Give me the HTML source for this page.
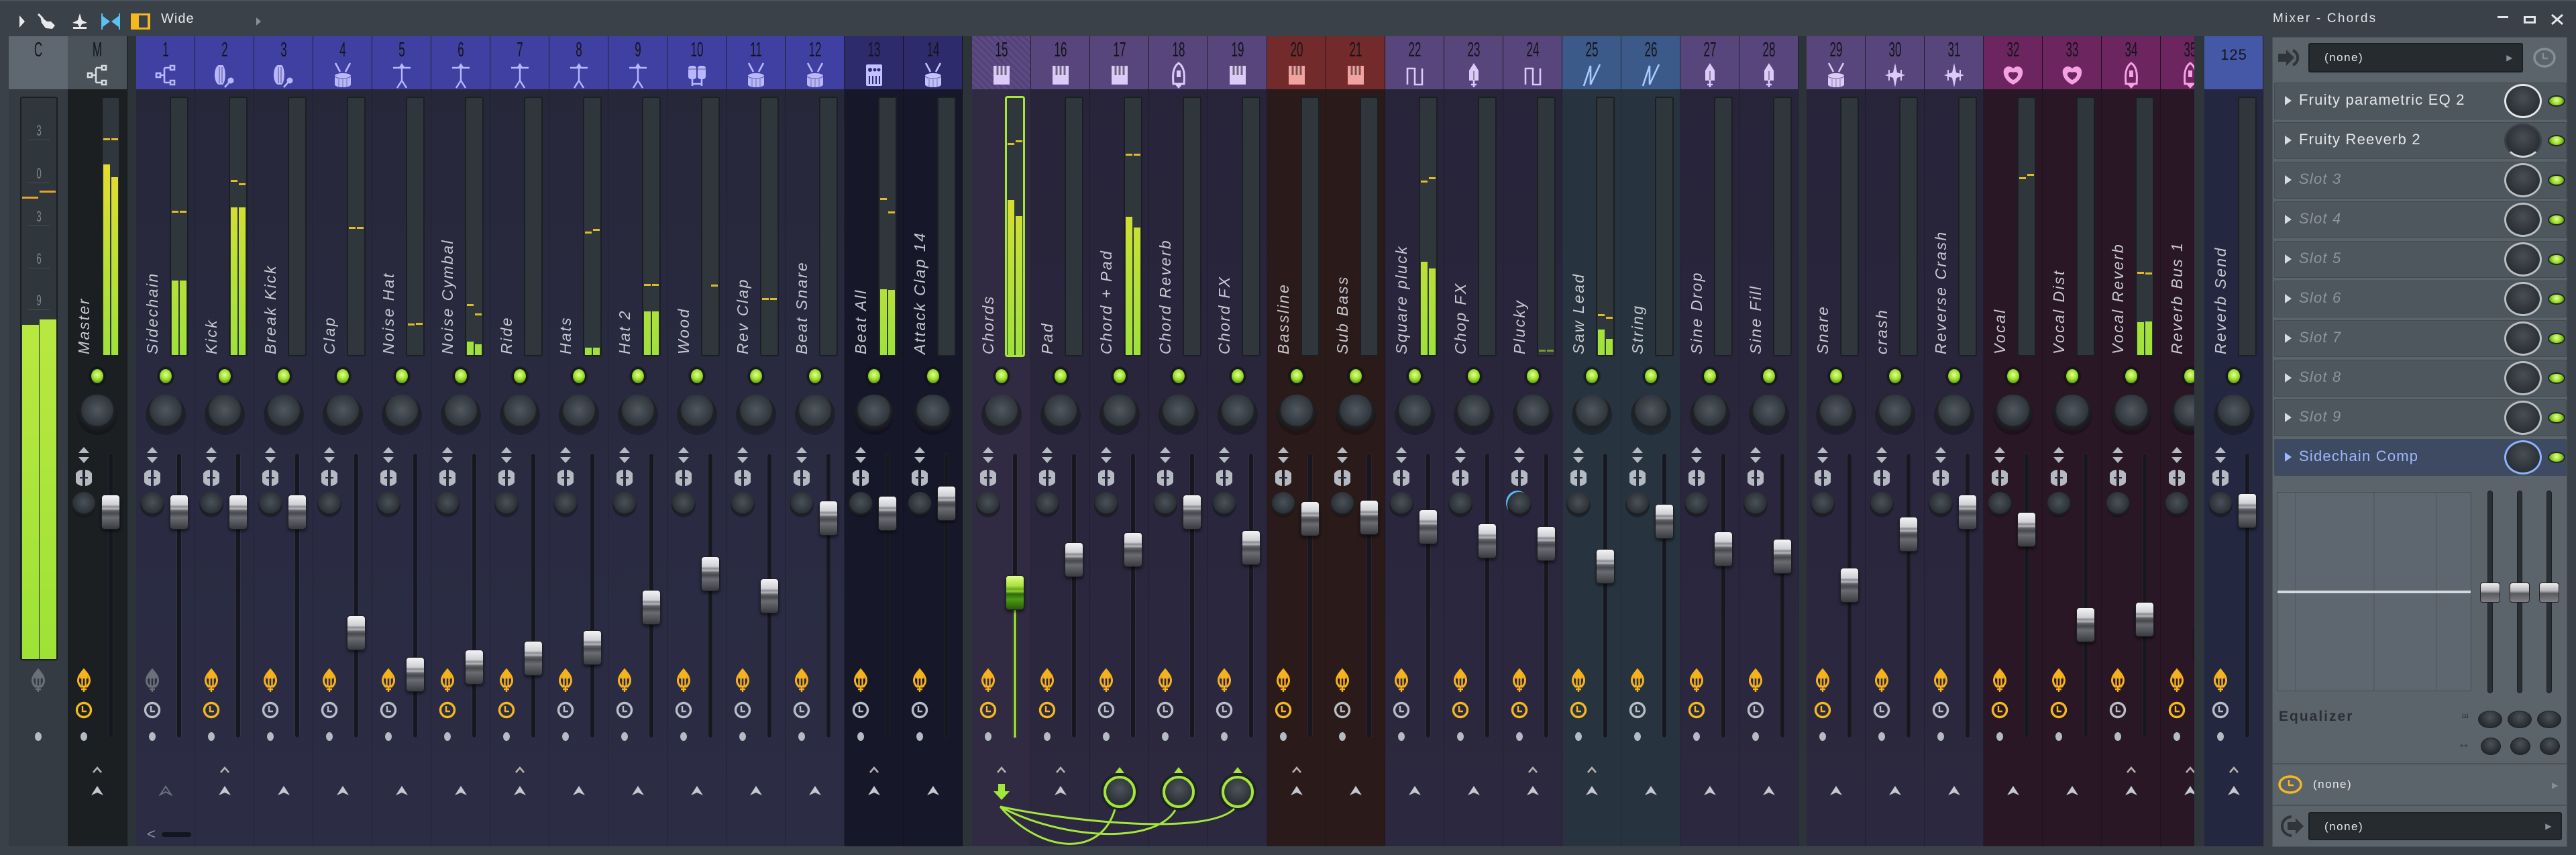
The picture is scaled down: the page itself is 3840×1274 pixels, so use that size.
<!DOCTYPE html>
<html><head><meta charset="utf-8"><style>
*{box-sizing:border-box}
body{margin:0;width:3840px;height:1274px;background:#3a4148;overflow:hidden;font-family:"Liberation Sans",sans-serif;position:relative}
i,svg{position:absolute;display:block}
#mx{position:absolute;left:0;top:0;width:3271px;height:1261px;overflow:hidden}
.s{position:absolute;top:54px;width:88px;height:1207px;border-right:1px solid rgba(0,0,0,.22)}
.h{position:absolute;left:0;top:0;width:100%;height:79px}
.h b{position:absolute;left:0;top:4px;width:88px;text-align:center;font-weight:normal;font-size:31px;line-height:32px;color:#14141c;transform:scaleX(.55)}
.hi{left:24px;top:38px;width:40px;height:40px}
.m{position:absolute;left:50px;top:90px;width:28px;height:387px;background:#30373c;border:2px solid #1b1f23;border-radius:3px}
.m i{bottom:0;width:10px;background:linear-gradient(to top,#9ee23a 0,#bfe035 150px,#e6dc2e 280px,#f5c02a 383px);background-size:100% 383px;background-position:bottom}
.m u{position:absolute;width:10px;height:3px;background:#e2bb2a}
.m .L{left:1px}.m .R{left:13px}
.s p{position:absolute;margin:0;left:12px;top:474px;transform-origin:0 0;transform:rotate(-90deg);white-space:nowrap;font-style:italic;font-size:23px;line-height:24px;letter-spacing:2.4px;color:#c9c9d2}
.led{left:33px;top:494px;width:22px;height:25px;border-radius:50%;background:radial-gradient(circle at 50% 40%,#e6ff90,#9ee030 45%,#5a9a10 80%);border:2px solid #15191b;box-shadow:0 0 0 2px rgba(0,0,0,.3)}
.kn{left:14px;top:534px;width:60px;height:60px;border-radius:50%;background:radial-gradient(circle at 50% 38%,#50575f,#30363c 48%,#1d2125 52%,rgba(0,0,0,.25) 70%)}
.ud{left:13px;top:611px;width:22px;height:26px}
.pn{left:12px;top:645px;width:24px;height:26px}
.sk{left:6px;top:679px;width:36px;height:38px;border-radius:50%;background:radial-gradient(circle at 50% 40%,#4a5159,#2c3237 55%,#1a1e22 62%,rgba(0,0,0,.25) 75%)}
.tr{left:61px;top:622px;width:6px;height:423px;background:#17181f;border-radius:3px;box-shadow:0 0 0 1px rgba(255,255,255,.04)}
.fd{left:50px;width:28px;height:52px;border-radius:5px;border:1px solid #1d1f24;background:linear-gradient(#f4f4f6 0,#cfd0d4 28%,#8a8b90 34%,#b6b7bb 40%,#606166 46%,#48494e 54%,#6b6c72 66%,#3a3b40 100%);box-shadow:0 3px 4px rgba(0,0,0,.5)}
.fd.g{background:linear-gradient(#e2ff8a 0,#a8e040 30%,#6aa820 40%,#8ed030 46%,#2e6a0c 54%,#4e9a16 70%,#2a5a0a 100%)}
.bl{left:13px;top:942px;width:22px;height:36px;color:#f6b21e}
.bl.off{color:#6b7179}
.ck{left:11px;top:991px;width:26px;height:26px;color:#b9bec6}
.ck.y{color:#f4b820}
.dt{left:19px;top:1037px;width:10px;height:13px;border-radius:50%;background:#b4bbc3}
.sa{left:37px;top:1088px;width:14px;height:10px}
.ba{left:34px;top:1116px;width:20px;height:16px}
.gk{left:20px;top:1102px;width:48px;height:48px;border-radius:50%;border:4px solid #a4e63a;background:radial-gradient(circle at 50% 38%,#4d545c,#2b3136 70%);box-shadow:0 0 0 4px #1f2228}
.gb{background:linear-gradient(#262739,#2a2b42 60%,#2c2d45)}.gb .h{background:#4040a2;color:#b7b6ff}
.gn{background:#17172a}.gn .h{background:#2d2b6c;color:#c2c0ff}
.gp{background:linear-gradient(#27243a,#2c283f)}.gp .h{background:#57457b;color:#dccaf8}
.gr{background:#2a1a1a}.gr .h{background:#732a2b;color:#f2a3a0}
.gs{background:#27343f}.gs .h{background:#3c5a89;color:#a6ccff}
.gm{background:#291725}.gm .h{background:#6d2560;color:#f4a2e2}
.sel{background:#302a42}.sel .h{background:repeating-linear-gradient(45deg,#5e4b84 0 3px,#54437a 3px 7px)}
.sep{position:absolute;top:54px;height:1207px;background:#2d3439}
#rp{position:absolute;left:3387px;top:55px;width:440px;height:1207px;background:#5b636b;border:1px solid #4a5158}
.sl{position:absolute;left:2px;width:436px;height:55px;background:#4e565e;border:1px solid #434a51;border-radius:2px}
.sl span{position:absolute;left:36px;top:12px;font-size:22px;letter-spacing:1.2px;color:#e4e7ea;white-space:nowrap}
.sl.e span{font-style:italic;color:#8d949b}
.sl.a{background:#3d4a61}.sl.a span{color:#9cb8ff}
.sl .t{position:absolute;left:15px;top:19px;width:0;height:0;border-left:10px solid #d8dce0;border-top:7px solid transparent;border-bottom:7px solid transparent}
.sl .k{position:absolute;left:342px;top:1px;width:56px;height:51px;border-radius:50%;border:3px solid #b9bec3;background:radial-gradient(circle at 50% 40%,#474e55,#2b3035 70%)}
.sl .l{position:absolute;left:407px;top:18px;width:26px;height:17px;border-radius:50%;background:radial-gradient(circle at 50% 40%,#e6ff90,#9ee030 45%,#5a9a10 85%);border:2px solid #23282c}
.dd{position:absolute;background:#262b30;border:2px solid #1d2125;border-radius:3px;color:#e6e8ea;font-size:17px;letter-spacing:1.5px;padding:10px 0 0 22px}
.tk{position:absolute;width:8px;background:#2a2f34;border:1px solid #1c2024;border-radius:4px}
.th{position:absolute;width:30px;height:30px;border-radius:4px;background:linear-gradient(#eee,#b4b5b9 40%,#5a5b60 55%,#808186);border:1px solid #222}
.sm{position:absolute;width:30px;height:26px;border-radius:50%;background:radial-gradient(circle at 50% 35%,#4a5158,#262b30 70%);border:1px solid #1c2024}
</style></head><body>
<svg width="0" height="0" style="position:absolute">
<defs>
<symbol id="ud" viewBox="0 0 22 26"><path d="M11 1L19 10H3Z M3 16H19L11 25Z" fill="#b4b9c2"/></symbol>
<symbol id="pn" viewBox="0 0 24 26"><path d="M10 1A12 12 0 0 0 10 25Z M14 1A12 12 0 0 1 14 25Z" fill="#b4b9c2"/><path d="M6 13h12" stroke="#2a2b40" stroke-width="2"/></symbol>
<symbol id="bulb" viewBox="0 0 22 36"><path d="M11 2C6 8 2.5 12 2.5 18C2.5 23 5 25 6.5 27H15.5C17 25 19.5 23 19.5 18C19.5 12 16 8 11 2Z" fill="none" stroke="currentColor" stroke-width="3"/><path d="M11 3C8 7 5 11 5 15H17C17 11 14 7 11 3Z" fill="currentColor"/><path d="M8.5 15V27M13.5 15V27M11 27V35M7 31H15" stroke="currentColor" stroke-width="2.4"/></symbol>
<symbol id="ck" viewBox="0 0 26 26"><circle cx="13" cy="13" r="10.5" fill="none" stroke="currentColor" stroke-width="3.4"/><path d="M11 7V15H17" stroke="currentColor" stroke-width="2.4" fill="none"/></symbol>
<symbol id="sa" viewBox="0 0 14 10"><path d="M1 9L7 2L13 9" fill="none" stroke="#b6b0ae" stroke-width="2.6"/></symbol>
<symbol id="sag" viewBox="0 0 14 10"><path d="M0 10L7 1L14 10Z" fill="#a4e63a"/></symbol>
<symbol id="ba" viewBox="0 0 20 16"><path d="M10 1L19 15L10 11L1 15Z" fill="#c4c8d0"/></symbol>
<symbol id="bao" viewBox="0 0 20 16"><path d="M10 2L18 14L10 10L2 14Z" fill="none" stroke="#6b7280" stroke-width="2"/></symbol>
<symbol id="bad" viewBox="0 0 26 24"><path d="M8 0H18V11H25L13 24L1 11H8Z" fill="#a4e63a"/></symbol>
<symbol id="route" viewBox="0 0 40 40"><path d="M6 17h6v6H6z M27 6h6v6h-6z M27 28h6v6h-6z M12 20h6 M18 9v22 M18 9h9 M18 31h9" fill="none" stroke="currentColor" stroke-width="2.6"/></symbol>
<symbol id="kick" viewBox="0 0 40 40"><path d="M11 5C3 8 3 31 11 34H17C22 30 22 9 17 5Z" fill="currentColor"/><path d="M12 8v24M16 8v24" stroke="#000" stroke-opacity=".35" stroke-width="1.6"/><circle cx="29" cy="28" r="4.5" fill="currentColor"/><path d="M27 30L20 38" stroke="currentColor" stroke-width="2.6"/></symbol>
<symbol id="drum" viewBox="0 0 40 40"><path d="M9 2L16 15M31 2L24 15" stroke="currentColor" stroke-width="2.6"/><path d="M8 21a12 4 0 0 1 24 0V34a12 4 0 0 1-24 0Z" fill="currentColor"/><path d="M8 21a12 4 0 0 0 24 0" stroke="#000" stroke-opacity=".35" stroke-width="1.5" fill="none"/><path d="M14 26v11M20 26v12M26 26v11" stroke="#000" stroke-opacity=".25" stroke-width="1.5"/></symbol>
<symbol id="cym" viewBox="0 0 40 40"><path d="M7 9H33M20 6V28M20 28L13 39M20 28L27 39" stroke="currentColor" stroke-width="2.4" fill="none"/><path d="M20 2L24 8H16Z" fill="currentColor"/></symbol>
<symbol id="bongo" viewBox="0 0 40 40"><rect x="7" y="6" width="12" height="20" rx="4" fill="currentColor"/><rect x="21" y="6" width="12" height="20" rx="4" fill="currentColor"/><path d="M7 11h12M21 11h12" stroke="#000" stroke-opacity=".3" stroke-width="1.5"/><path d="M13 26v10M27 26v10M13 33h14" stroke="currentColor" stroke-width="2.6"/></symbol>
<symbol id="mach" viewBox="0 0 40 40"><rect x="8" y="4" width="24" height="32" rx="2" fill="currentColor"/><circle cx="14" cy="12" r="3" fill="#2d2b6c"/><circle cx="21" cy="12" r="2.5" fill="#2d2b6c"/><circle cx="27" cy="12" r="2.5" fill="#2d2b6c"/><path d="M13 21v12M18 21v12M23 21v12M28 21v12" stroke="#2d2b6c" stroke-width="2"/></symbol>
<symbol id="piano" viewBox="0 0 40 40"><rect x="8" y="6" width="24" height="28" fill="currentColor"/><path d="M14 6v14M20 6v14M26 6v14" stroke="#000" stroke-opacity=".5" stroke-width="3"/></symbol>
<symbol id="rocket" viewBox="0 0 40 40"><path d="M20 2C11 8 11 20 12 33H28C29 20 29 8 20 2Z" fill="none" stroke="currentColor" stroke-width="3"/><path d="M17 13h6v10h-6z M14 33L20 40L26 33Z" fill="currentColor"/></symbol>
<symbol id="pen" viewBox="0 0 40 40"><path d="M20 2L27 13V28H13V13Z" fill="currentColor"/><path d="M20 14V27" stroke="#000" stroke-opacity=".35" stroke-width="2"/><path d="M20 28v10M16 34h8" stroke="currentColor" stroke-width="2.6"/></symbol>
<symbol id="sq" viewBox="0 0 40 40"><path d="M9 34V10H20V34H31V10" fill="none" stroke="currentColor" stroke-width="2.6"/></symbol>
<symbol id="saw" viewBox="0 0 40 40"><path d="M8 36L18 6V34L32 4" fill="none" stroke="currentColor" stroke-width="2.6"/></symbol>
<symbol id="spark" viewBox="0 0 40 40"><path d="M20 2L23 16L35 20L23 24L20 38L17 24L5 20L17 16Z" fill="currentColor"/><path d="M11 12v16M29 12v16" stroke="currentColor" stroke-width="2"/></symbol>
<symbol id="lips" viewBox="0 0 40 40"><path d="M20 10C14 4 4 8 6 18C8 28 16 32 20 34C24 32 32 28 34 18C36 8 26 4 20 10Z M20 16C16 14 12 16 13 20C15 25 20 27 20 27C20 27 25 25 27 20C28 16 24 14 20 16Z" fill="currentColor" fill-rule="evenodd"/></symbol>
</defs></svg>

<!-- toolbar -->
<div style="position:absolute;left:0;top:0;width:3840px;height:2px;background:#4a525a"></div>
<svg style="left:24px;top:20px" width="400" height="24" viewBox="0 0 400 24">
<path d="M5 3L13 12L5 21Z" fill="#e8eaee"/>
<path d="M36 4L46 12L52 12L58 18L54 23L44 22L38 14Z" fill="#e8eaee"/><path d="M33 1L40 8" stroke="#e8eaee" stroke-width="3"/>
<path d="M95 0L98 10L106 14L98 16L96 20H105V23H85V20H94L92 16L84 14L92 10Z" fill="#e8eaee"/>
<path d="M128 3L140 12L128 21Z M154 3L142 12L154 21Z" fill="#5bc0f2"/><path d="M128 0V24M154 0V24" stroke="#5bc0f2" stroke-width="2"/>
<rect x="173" y="1" width="25" height="22" fill="none" stroke="#f5b820" stroke-width="4"/><rect x="175" y="3" width="8" height="18" fill="#f5b820"/>
<path d="M358 6L365 12L358 18Z" fill="#8a9098"/>
</svg>
<div style="position:absolute;left:240px;top:17px;font-size:20px;color:#e2e6ea;letter-spacing:1px">Wide</div>

<div id="mx">
<!-- C column -->
<div style="position:absolute;left:13px;top:54px;width:88px;height:1207px;background:#343b42">
<div style="position:absolute;left:0;top:0;width:88px;height:79px;background:#5f6870"></div>
<div style="position:absolute;left:0;top:4px;width:88px;text-align:center;font-size:31px;line-height:32px;color:#14141c;transform:scaleX(.55)">C</div>
<div style="position:absolute;left:17px;top:90px;width:56px;height:840px;background:#30373c;border:2px solid #1b1f23;border-radius:3px">
<div style="position:absolute;left:0;top:36px;width:52px;text-align:center;font-size:22px;color:#7f878e;transform:scaleX(.6)">3</div>
<div style="position:absolute;left:10px;top:62px;width:32px;height:1px;background:#444c53"></div>
<div style="position:absolute;left:0;top:100px;width:52px;text-align:center;font-size:22px;color:#7f878e;transform:scaleX(.6)">0</div>
<div style="position:absolute;left:10px;top:126px;width:32px;height:1px;background:#444c53"></div>
<div style="position:absolute;left:0;top:164px;width:52px;text-align:center;font-size:22px;color:#7f878e;transform:scaleX(.6)">3</div>
<div style="position:absolute;left:10px;top:190px;width:32px;height:1px;background:#444c53"></div>
<div style="position:absolute;left:0;top:227px;width:52px;text-align:center;font-size:22px;color:#7f878e;transform:scaleX(.6)">6</div>
<div style="position:absolute;left:10px;top:253px;width:32px;height:1px;background:#444c53"></div>
<div style="position:absolute;left:0;top:289px;width:52px;text-align:center;font-size:22px;color:#7f878e;transform:scaleX(.6)">9</div>
<div style="position:absolute;left:10px;top:315px;width:32px;height:1px;background:#444c53"></div>
<div style="position:absolute;left:1px;top:147px;width:24px;height:3px;background:#e8a32a"></div>
<div style="position:absolute;left:27px;top:138px;width:24px;height:3px;background:#e8a32a"></div>
<div style="position:absolute;left:1px;top:338px;width:25px;height:498px;background:linear-gradient(#b8e840,#9ee236)"></div>
<div style="position:absolute;left:27px;top:330px;width:25px;height:506px;background:linear-gradient(#b8e840,#9ee236)"></div>
</div>
<svg class="bl off" style="left:33px"><use href="#bulb"/></svg>
<i class="dt" style="left:39px"></i>
</div>

<!-- Master -->
<div class="s" style="left:101px;width:89px;background:#1b1f21"><div class="h" style="background:#4a525a;color:#d8dde2"><b>M</b><svg class="hi"><use href="#route"/></svg></div>
<div class="m"><i class="L" style="height:284px"></i><i class="R" style="height:265px"></i><u class="L" style="top:60px"></u><u class="R" style="top:60px"></u></div><p>Master</p>
<i class="led"></i><i class="kn"></i><svg class="ud"><use href="#ud"/></svg><svg class="pn"><use href="#pn"/></svg><i class="sk"></i><i class="tr"></i><i class="fd" style="top:683px"></i>
<svg class="bl"><use href="#bulb"/></svg><svg class="ck y"><use href="#ck"/></svg><i class="dt"></i><svg class="sa"><use href="#sa"/></svg><svg class="ba"><use href="#ba"/></svg></div>
<div class="sep" style="left:190px;width:13px"></div>

<div class="s gb" style="left:203px"><div class="h"><b>1</b><svg class="hi"><use href="#route"/></svg></div><div class="m"><i class="L" style="height:111px"></i><i class="R" style="height:111px"></i><u class="L" style="top:168px"></u><u class="R" style="top:168px"></u></div><p>Sidechain</p>
<i class="led"></i><i class="kn"></i><svg class="ud"><use href="#ud"/></svg><svg class="pn"><use href="#pn"/></svg><i class="sk"></i><i class="tr"></i><i class="fd" style="top:683px"></i>
<svg class="bl off"><use href="#bulb"/></svg><svg class="ck"><use href="#ck"/></svg><i class="dt"></i><svg class="ba"><use href="#bao"/></svg>
<div style="position:absolute;left:16px;top:1176px;color:#8a8f98;font-size:22px">&lt;</div><div style="position:absolute;left:38px;top:1186px;width:44px;height:7px;border-radius:4px;background:#121620"></div></div>

<div class="s gb" style="left:291px"><div class="h"><b>2</b><svg class="hi"><use href="#kick"/></svg></div><div class="m"><i class="L" style="height:220px"></i><i class="R" style="height:220px"></i><u class="L" style="top:122px"></u><u class="R" style="top:127px"></u></div><p>Kick</p>
<i class="led"></i><i class="kn"></i><svg class="ud"><use href="#ud"/></svg><svg class="pn"><use href="#pn"/></svg><i class="sk"></i><i class="tr"></i><i class="fd" style="top:683px"></i>
<svg class="bl"><use href="#bulb"/></svg><svg class="ck y"><use href="#ck"/></svg><i class="dt"></i><svg class="sa"><use href="#sa"/></svg><svg class="ba"><use href="#ba"/></svg></div>

<div class="s gb" style="left:379px"><div class="h"><b>3</b><svg class="hi"><use href="#kick"/></svg></div><div class="m"></div><p>Break Kick</p>
<i class="led"></i><i class="kn"></i><svg class="ud"><use href="#ud"/></svg><svg class="pn"><use href="#pn"/></svg><i class="sk"></i><i class="tr"></i><i class="fd" style="top:683px"></i>
<svg class="bl"><use href="#bulb"/></svg><svg class="ck"><use href="#ck"/></svg><i class="dt"></i><svg class="ba"><use href="#ba"/></svg></div>

<div class="s gb" style="left:467px"><div class="h"><b>4</b><svg class="hi"><use href="#drum"/></svg></div><div class="m"><u class="L" style="top:192px"></u><u class="R" style="top:192px"></u></div><p>Clap</p>
<i class="led"></i><i class="kn"></i><svg class="ud"><use href="#ud"/></svg><svg class="pn"><use href="#pn"/></svg><i class="sk"></i><i class="tr"></i><i class="fd" style="top:863px"></i>
<svg class="bl"><use href="#bulb"/></svg><svg class="ck"><use href="#ck"/></svg><i class="dt"></i><svg class="ba"><use href="#ba"/></svg></div>

<div class="s gb" style="left:555px"><div class="h"><b>5</b><svg class="hi"><use href="#cym"/></svg></div><div class="m"><u class="L" style="top:336px"></u><u class="R" style="top:335px"></u></div><p>Noise Hat</p>
<i class="led"></i><i class="kn"></i><svg class="ud"><use href="#ud"/></svg><svg class="pn"><use href="#pn"/></svg><i class="sk"></i><i class="tr"></i><i class="fd" style="top:925px"></i>
<svg class="bl"><use href="#bulb"/></svg><svg class="ck"><use href="#ck"/></svg><i class="dt"></i><svg class="ba"><use href="#ba"/></svg></div>

<div class="s gb" style="left:643px"><div class="h"><b>6</b><svg class="hi"><use href="#cym"/></svg></div><div class="m"><i class="L" style="height:20px"></i><i class="R" style="height:16px"></i><u class="L" style="top:307px"></u><u class="R" style="top:321px"></u></div><p>Noise Cymbal</p>
<i class="led"></i><i class="kn"></i><svg class="ud"><use href="#ud"/></svg><svg class="pn"><use href="#pn"/></svg><i class="sk"></i><i class="tr"></i><i class="fd" style="top:914px"></i>
<svg class="bl"><use href="#bulb"/></svg><svg class="ck y"><use href="#ck"/></svg><i class="dt"></i><svg class="ba"><use href="#ba"/></svg></div>

<div class="s gb" style="left:731px"><div class="h"><b>7</b><svg class="hi"><use href="#cym"/></svg></div><div class="m"></div><p>Ride</p>
<i class="led"></i><i class="kn"></i><svg class="ud"><use href="#ud"/></svg><svg class="pn"><use href="#pn"/></svg><i class="sk"></i><i class="tr"></i><i class="fd" style="top:901px"></i>
<svg class="bl"><use href="#bulb"/></svg><svg class="ck y"><use href="#ck"/></svg><i class="dt"></i><svg class="sa"><use href="#sa"/></svg><svg class="ba"><use href="#ba"/></svg></div>

<div class="s gb" style="left:819px"><div class="h"><b>8</b><svg class="hi"><use href="#cym"/></svg></div><div class="m"><i class="L" style="height:11px"></i><i class="R" style="height:11px"></i><u class="L" style="top:199px"></u><u class="R" style="top:195px"></u></div><p>Hats</p>
<i class="led"></i><i class="kn"></i><svg class="ud"><use href="#ud"/></svg><svg class="pn"><use href="#pn"/></svg><i class="sk"></i><i class="tr"></i><i class="fd" style="top:885px"></i>
<svg class="bl"><use href="#bulb"/></svg><svg class="ck"><use href="#ck"/></svg><i class="dt"></i><svg class="ba"><use href="#ba"/></svg></div>

<div class="s gb" style="left:907px"><div class="h"><b>9</b><svg class="hi"><use href="#cym"/></svg></div><div class="m"><i class="L" style="height:65px"></i><i class="R" style="height:65px"></i><u class="L" style="top:277px"></u><u class="R" style="top:277px"></u></div><p>Hat 2</p>
<i class="led"></i><i class="kn"></i><svg class="ud"><use href="#ud"/></svg><svg class="pn"><use href="#pn"/></svg><i class="sk"></i><i class="tr"></i><i class="fd" style="top:825px"></i>
<svg class="bl"><use href="#bulb"/></svg><svg class="ck"><use href="#ck"/></svg><i class="dt"></i><svg class="ba"><use href="#ba"/></svg></div>

<div class="s gb" style="left:995px"><div class="h"><b>10</b><svg class="hi"><use href="#bongo"/></svg></div><div class="m"><u class="R" style="top:278px"></u></div><p>Wood</p>
<i class="led"></i><i class="kn"></i><svg class="ud"><use href="#ud"/></svg><svg class="pn"><use href="#pn"/></svg><i class="sk"></i><i class="tr"></i><i class="fd" style="top:775px"></i>
<svg class="bl"><use href="#bulb"/></svg><svg class="ck"><use href="#ck"/></svg><i class="dt"></i><svg class="ba"><use href="#ba"/></svg></div>

<div class="s gb" style="left:1083px"><div class="h"><b>11</b><svg class="hi"><use href="#drum"/></svg></div><div class="m"><u class="L" style="top:298px"></u><u class="R" style="top:298px"></u></div><p>Rev Clap</p>
<i class="led"></i><i class="kn"></i><svg class="ud"><use href="#ud"/></svg><svg class="pn"><use href="#pn"/></svg><i class="sk"></i><i class="tr"></i><i class="fd" style="top:808px"></i>
<svg class="bl"><use href="#bulb"/></svg><svg class="ck"><use href="#ck"/></svg><i class="dt"></i><svg class="ba"><use href="#ba"/></svg></div>

<div class="s gb" style="left:1171px"><div class="h"><b>12</b><svg class="hi"><use href="#drum"/></svg></div><div class="m"></div><p>Beat Snare</p>
<i class="led"></i><i class="kn"></i><svg class="ud"><use href="#ud"/></svg><svg class="pn"><use href="#pn"/></svg><i class="sk"></i><i class="tr"></i><i class="fd" style="top:692px"></i>
<svg class="bl"><use href="#bulb"/></svg><svg class="ck"><use href="#ck"/></svg><i class="dt"></i><svg class="ba"><use href="#ba"/></svg></div>

<div class="s gn" style="left:1259px"><div class="h"><b>13</b><svg class="hi"><use href="#mach"/></svg></div><div class="m"><i class="L" style="height:98px"></i><i class="R" style="height:97px"></i><u class="L" style="top:149px"></u><u class="R" style="top:169px"></u></div><p>Beat All</p>
<i class="led"></i><i class="kn"></i><svg class="ud"><use href="#ud"/></svg><svg class="pn"><use href="#pn"/></svg><i class="sk"></i><i class="tr"></i><i class="fd" style="top:685px"></i>
<svg class="bl"><use href="#bulb"/></svg><svg class="ck"><use href="#ck"/></svg><i class="dt"></i><svg class="sa"><use href="#sa"/></svg><svg class="ba"><use href="#ba"/></svg></div>

<div class="s gn" style="left:1347px"><div class="h"><b>14</b><svg class="hi"><use href="#drum"/></svg></div><div class="m"></div><p>Attack Clap 14</p>
<i class="led"></i><i class="kn"></i><svg class="ud"><use href="#ud"/></svg><svg class="pn"><use href="#pn"/></svg><i class="sk"></i><i class="tr"></i><i class="fd" style="top:670px"></i>
<svg class="bl"><use href="#bulb"/></svg><svg class="ck"><use href="#ck"/></svg><i class="dt"></i><svg class="ba"><use href="#ba"/></svg></div>

<div class="sep" style="left:1435px;width:14px"></div>

<div class="s gp sel" style="left:1449px"><div class="h"><b>15</b><svg class="hi"><use href="#piano"/></svg></div><div class="m" style="border-color:#a4e63a;box-shadow:0 0 0 1px #a4e63a"><i class="L" style="height:231px"></i><i class="R" style="height:207px"></i><u class="L" style="top:67px"></u><u class="R" style="top:63px"></u></div><p>Chords</p>
<i class="led"></i><i class="kn"></i><svg class="ud"><use href="#ud"/></svg><svg class="pn"><use href="#pn"/></svg><i class="sk"></i><i class="tr"></i><i style="left:62px;top:840px;width:4px;height:205px;background:#96d632"></i><i class="fd g" style="top:803px"></i>
<svg class="bl"><use href="#bulb"/></svg><svg class="ck y"><use href="#ck"/></svg><i class="dt"></i><svg class="sa"><use href="#sa"/></svg><svg style="left:31px;top:1114px;width:26px;height:24px"><use href="#bad"/></svg></div>

<div class="s gp" style="left:1537px"><div class="h"><b>16</b><svg class="hi"><use href="#piano"/></svg></div><div class="m"></div><p>Pad</p>
<i class="led"></i><i class="kn"></i><svg class="ud"><use href="#ud"/></svg><svg class="pn"><use href="#pn"/></svg><i class="sk"></i><i class="tr"></i><i class="fd" style="top:754px"></i>
<svg class="bl"><use href="#bulb"/></svg><svg class="ck y"><use href="#ck"/></svg><i class="dt"></i><svg class="sa"><use href="#sa"/></svg><svg class="ba"><use href="#ba"/></svg></div>

<div class="s gp" style="left:1625px"><div class="h"><b>17</b><svg class="hi"><use href="#piano"/></svg></div><div class="m"><i class="L" style="height:206px"></i><i class="R" style="height:190px"></i><u class="L" style="top:83px"></u><u class="R" style="top:83px"></u></div><p>Chord + Pad</p>
<i class="led"></i><i class="kn"></i><svg class="ud"><use href="#ud"/></svg><svg class="pn"><use href="#pn"/></svg><i class="sk"></i><i class="tr"></i><i class="fd" style="top:739px"></i>
<svg class="bl"><use href="#bulb"/></svg><svg class="ck"><use href="#ck"/></svg><i class="dt"></i><svg class="sa"><use href="#sag"/></svg><i class="gk"></i></div>

<div class="s gp" style="left:1713px"><div class="h"><b>18</b><svg class="hi"><use href="#rocket"/></svg></div><div class="m"></div><p>Chord Reverb</p>
<i class="led"></i><i class="kn"></i><svg class="ud"><use href="#ud"/></svg><svg class="pn"><use href="#pn"/></svg><i class="sk"></i><i class="tr"></i><i class="fd" style="top:683px"></i>
<svg class="bl"><use href="#bulb"/></svg><svg class="ck"><use href="#ck"/></svg><i class="dt"></i><svg class="sa"><use href="#sag"/></svg><i class="gk"></i></div>

<div class="s gp" style="left:1801px"><div class="h"><b>19</b><svg class="hi"><use href="#piano"/></svg></div><div class="m"></div><p>Chord FX</p>
<i class="led"></i><i class="kn"></i><svg class="ud"><use href="#ud"/></svg><svg class="pn"><use href="#pn"/></svg><i class="sk"></i><i class="tr"></i><i class="fd" style="top:736px"></i>
<svg class="bl"><use href="#bulb"/></svg><svg class="ck"><use href="#ck"/></svg><i class="dt"></i><svg class="sa"><use href="#sag"/></svg><i class="gk"></i></div>

<div class="s gr" style="left:1889px"><div class="h"><b>20</b><svg class="hi"><use href="#piano"/></svg></div><div class="m"></div><p>Bassline</p>
<i class="led"></i><i class="kn"></i><svg class="ud"><use href="#ud"/></svg><svg class="pn"><use href="#pn"/></svg><i class="sk"></i><i class="tr"></i><i class="fd" style="top:693px"></i>
<svg class="bl"><use href="#bulb"/></svg><svg class="ck y"><use href="#ck"/></svg><i class="dt"></i><svg class="sa"><use href="#sa"/></svg><svg class="ba"><use href="#ba"/></svg></div>

<div class="s gr" style="left:1977px"><div class="h"><b>21</b><svg class="hi"><use href="#piano"/></svg></div><div class="m"></div><p>Sub Bass</p>
<i class="led"></i><i class="kn"></i><svg class="ud"><use href="#ud"/></svg><svg class="pn"><use href="#pn"/></svg><i class="sk"></i><i class="tr"></i><i class="fd" style="top:691px"></i>
<svg class="bl"><use href="#bulb"/></svg><svg class="ck"><use href="#ck"/></svg><i class="dt"></i><svg class="ba"><use href="#ba"/></svg></div>

<div class="s gp" style="left:2065px"><div class="h"><b>22</b><svg class="hi"><use href="#sq"/></svg></div><div class="m"><i class="L" style="height:139px"></i><i class="R" style="height:129px"></i><u class="L" style="top:123px"></u><u class="R" style="top:118px"></u></div><p>Square pluck</p>
<i class="led"></i><i class="kn"></i><svg class="ud"><use href="#ud"/></svg><svg class="pn"><use href="#pn"/></svg><i class="sk"></i><i class="tr"></i><i class="fd" style="top:705px"></i>
<svg class="bl"><use href="#bulb"/></svg><svg class="ck"><use href="#ck"/></svg><i class="dt"></i><svg class="ba"><use href="#ba"/></svg></div>

<div class="s gp" style="left:2153px"><div class="h"><b>23</b><svg class="hi"><use href="#pen"/></svg></div><div class="m"></div><p>Chop FX</p>
<i class="led"></i><i class="kn"></i><svg class="ud"><use href="#ud"/></svg><svg class="pn"><use href="#pn"/></svg><i class="sk"></i><i class="tr"></i><i class="fd" style="top:726px"></i>
<svg class="bl"><use href="#bulb"/></svg><svg class="ck y"><use href="#ck"/></svg><i class="dt"></i><svg class="ba"><use href="#ba"/></svg></div>

<div class="s gp" style="left:2241px"><div class="h"><b>24</b><svg class="hi"><use href="#sq"/></svg></div><div class="m"><u class="L" style="top:375px;background:#7a9a30"></u><u class="R" style="top:375px;background:#7a9a30"></u></div><p>Plucky</p>
<i class="led"></i><i class="kn"></i><svg class="ud"><use href="#ud"/></svg><svg class="pn"><use href="#pn"/></svg><i class="sk" style="box-shadow:-3px -3px 0 -1px #5ab8f0"></i><i class="tr"></i><i class="fd" style="top:730px"></i>
<svg class="bl"><use href="#bulb"/></svg><svg class="ck y"><use href="#ck"/></svg><i class="dt"></i><svg class="sa"><use href="#sa"/></svg><svg class="ba"><use href="#ba"/></svg></div>

<div class="s gs" style="left:2329px"><div class="h"><b>25</b><svg class="hi"><use href="#saw"/></svg></div><div class="m"><i class="L" style="height:38px"></i><i class="R" style="height:24px"></i><u class="L" style="top:322px"></u><u class="R" style="top:326px"></u></div><p>Saw Lead</p>
<i class="led"></i><i class="kn"></i><svg class="ud"><use href="#ud"/></svg><svg class="pn"><use href="#pn"/></svg><i class="sk"></i><i class="tr"></i><i class="fd" style="top:764px"></i>
<svg class="bl"><use href="#bulb"/></svg><svg class="ck y"><use href="#ck"/></svg><i class="dt"></i><svg class="sa"><use href="#sa"/></svg><svg class="ba"><use href="#ba"/></svg></div>

<div class="s gs" style="left:2417px"><div class="h"><b>26</b><svg class="hi"><use href="#saw"/></svg></div><div class="m"></div><p>String</p>
<i class="led"></i><i class="kn"></i><svg class="ud"><use href="#ud"/></svg><svg class="pn"><use href="#pn"/></svg><i class="sk"></i><i class="tr"></i><i class="fd" style="top:697px"></i>
<svg class="bl"><use href="#bulb"/></svg><svg class="ck"><use href="#ck"/></svg><i class="dt"></i><svg class="ba"><use href="#ba"/></svg></div>

<div class="s gp" style="left:2505px"><div class="h"><b>27</b><svg class="hi"><use href="#pen"/></svg></div><div class="m"></div><p>Sine Drop</p>
<i class="led"></i><i class="kn"></i><svg class="ud"><use href="#ud"/></svg><svg class="pn"><use href="#pn"/></svg><i class="sk"></i><i class="tr"></i><i class="fd" style="top:738px"></i>
<svg class="bl"><use href="#bulb"/></svg><svg class="ck y"><use href="#ck"/></svg><i class="dt"></i><svg class="ba"><use href="#ba"/></svg></div>

<div class="s gp" style="left:2593px"><div class="h"><b>28</b><svg class="hi"><use href="#pen"/></svg></div><div class="m"></div><p>Sine Fill</p>
<i class="led"></i><i class="kn"></i><svg class="ud"><use href="#ud"/></svg><svg class="pn"><use href="#pn"/></svg><i class="sk"></i><i class="tr"></i><i class="fd" style="top:749px"></i>
<svg class="bl"><use href="#bulb"/></svg><svg class="ck"><use href="#ck"/></svg><i class="dt"></i><svg class="ba"><use href="#ba"/></svg></div>

<div class="sep" style="left:2681px;width:12px"></div>

<div class="s gp" style="left:2693px"><div class="h"><b>29</b><svg class="hi"><use href="#drum"/></svg></div><div class="m"></div><p>Snare</p>
<i class="led"></i><i class="kn"></i><svg class="ud"><use href="#ud"/></svg><svg class="pn"><use href="#pn"/></svg><i class="sk"></i><i class="tr"></i><i class="fd" style="top:792px"></i>
<svg class="bl"><use href="#bulb"/></svg><svg class="ck y"><use href="#ck"/></svg><i class="dt"></i><svg class="ba"><use href="#ba"/></svg></div>

<div class="s gp" style="left:2781px"><div class="h"><b>30</b><svg class="hi"><use href="#spark"/></svg></div><div class="m"></div><p>crash</p>
<i class="led"></i><i class="kn"></i><svg class="ud"><use href="#ud"/></svg><svg class="pn"><use href="#pn"/></svg><i class="sk"></i><i class="tr"></i><i class="fd" style="top:716px"></i>
<svg class="bl"><use href="#bulb"/></svg><svg class="ck"><use href="#ck"/></svg><i class="dt"></i><svg class="ba"><use href="#ba"/></svg></div>

<div class="s gp" style="left:2869px"><div class="h"><b>31</b><svg class="hi"><use href="#spark"/></svg></div><div class="m"></div><p>Reverse Crash</p>
<i class="led"></i><i class="kn"></i><svg class="ud"><use href="#ud"/></svg><svg class="pn"><use href="#pn"/></svg><i class="sk"></i><i class="tr"></i><i class="fd" style="top:683px"></i>
<svg class="bl"><use href="#bulb"/></svg><svg class="ck"><use href="#ck"/></svg><i class="dt"></i><svg class="ba"><use href="#ba"/></svg></div>

<div class="s gm" style="left:2957px"><div class="h"><b>32</b><svg class="hi"><use href="#lips"/></svg></div><div class="m"><u class="L" style="top:118px"></u><u class="R" style="top:113px"></u></div><p>Vocal</p>
<i class="led"></i><i class="kn"></i><svg class="ud"><use href="#ud"/></svg><svg class="pn"><use href="#pn"/></svg><i class="sk"></i><i class="tr"></i><i class="fd" style="top:709px"></i>
<svg class="bl"><use href="#bulb"/></svg><svg class="ck y"><use href="#ck"/></svg><i class="dt"></i><svg class="ba"><use href="#ba"/></svg></div>

<div class="s gm" style="left:3045px"><div class="h"><b>33</b><svg class="hi"><use href="#lips"/></svg></div><div class="m"></div><p>Vocal Dist</p>
<i class="led"></i><i class="kn"></i><svg class="ud"><use href="#ud"/></svg><svg class="pn"><use href="#pn"/></svg><i class="sk"></i><i class="tr"></i><i class="fd" style="top:851px"></i>
<svg class="bl"><use href="#bulb"/></svg><svg class="ck y"><use href="#ck"/></svg><i class="dt"></i><svg class="ba"><use href="#ba"/></svg></div>

<div class="s gm" style="left:3133px"><div class="h"><b>34</b><svg class="hi"><use href="#rocket"/></svg></div><div class="m"><i class="L" style="height:49px"></i><i class="R" style="height:50px"></i><u class="L" style="top:259px"></u><u class="R" style="top:260px"></u></div><p>Vocal Reverb</p>
<i class="led"></i><i class="kn"></i><svg class="ud"><use href="#ud"/></svg><svg class="pn"><use href="#pn"/></svg><i class="sk"></i><i class="tr"></i><i class="fd" style="top:843px"></i>
<svg class="bl"><use href="#bulb"/></svg><svg class="ck"><use href="#ck"/></svg><i class="dt"></i><svg class="sa"><use href="#sa"/></svg><svg class="ba"><use href="#ba"/></svg></div>

<div class="s gm" style="left:3221px"><div class="h"><b>35</b><svg class="hi"><use href="#rocket"/></svg></div><div class="m"></div><p>Reverb Bus 1</p>
<i class="led"></i><i class="kn"></i><svg class="ud"><use href="#ud"/></svg><svg class="pn"><use href="#pn"/></svg><i class="sk"></i><i class="tr"></i><i class="fd" style="top:879px"></i>
<svg class="bl"><use href="#bulb"/></svg><svg class="ck y"><use href="#ck"/></svg><i class="dt"></i><svg class="sa"><use href="#sa"/></svg><svg class="ba"><use href="#ba"/></svg></div>

<svg style="left:0;top:0" width="3271" height="1261"><g fill="none" stroke="#a4e63a" stroke-width="3">
<path d="M1491 1202C1550 1270 1640 1280 1662 1206"/>
<path d="M1491 1202C1580 1250 1720 1260 1752 1207"/>
<path d="M1491 1202C1600 1225 1800 1245 1840 1205"/></g></svg>
</div>

<div class="sep" style="left:3271px;width:15px;background:#2e353b"></div>
<!-- 125 -->
<div class="s" style="left:3286px;background:#232840"><div class="h" style="background:#4558a8"><b style="transform:none;font-size:22px;top:12px;letter-spacing:1px">125</b></div>
<div class="m"></div><p>Reverb Send</p>
<i class="led"></i><i class="kn"></i><svg class="ud"><use href="#ud"/></svg><svg class="pn"><use href="#pn"/></svg><i class="sk"></i><i class="tr"></i><i class="fd" style="top:681px"></i>
<svg class="bl"><use href="#bulb"/></svg><svg class="ck"><use href="#ck"/></svg><i class="dt"></i><svg class="sa"><use href="#sa"/></svg><svg class="ba"><use href="#ba"/></svg></div>

<!-- title -->
<div style="position:absolute;left:3388px;top:17px;font-size:19px;letter-spacing:2.2px;color:#dfe3e8">Mixer - Chords</div>
<div style="position:absolute;left:3723px;top:24px;width:16px;height:3px;background:#e2e6ea"></div>
<div style="position:absolute;left:3762px;top:24px;width:18px;height:11px;border:3px solid #e2e6ea"></div>
<svg style="left:3803px;top:21px" width="18" height="16"><path d="M1 1L17 15M17 1L1 15" stroke="#e2e6ea" stroke-width="3"/></svg>

<div id="rp">
<svg style="left:6px;top:16px" width="40" height="30"><path d="M2 8H14V2L26 14L14 26V20H2Z" fill="#2f353a"/><path d="M24 3A12 12 0 0 1 24 25" fill="none" stroke="#2f353a" stroke-width="4"/></svg>
<div class="dd" style="left:53px;top:8px;width:320px;height:44px">(none)<span style="position:absolute;right:12px;top:13px;font-size:12px;color:#8a9096">▶</span></div>
<svg style="left:388px;top:14px" width="34" height="32"><ellipse cx="17" cy="16" rx="15" ry="13" fill="none" stroke="#868e95" stroke-width="3.5"/><path d="M15 9V17H22" stroke="#868e95" stroke-width="2.4" fill="none"/></svg>
<div class="sl" style="top:67px"><i class="t"></i><span>Fruity parametric EQ 2</span><i class="k" style="border-color:#e4e7ea"></i><i class="l"></i></div>
<div class="sl" style="top:126px"><i class="t"></i><span>Fruity Reeverb 2</span><i class="k" style="border-color:#3a4046;border-bottom-color:#d0d4d8"></i><i class="l"></i></div>
<div class="sl e" style="top:185px"><i class="t"></i><span>Slot 3</span><i class="k"></i><i class="l"></i></div>
<div class="sl e" style="top:244px"><i class="t"></i><span>Slot 4</span><i class="k"></i><i class="l"></i></div>
<div class="sl e" style="top:303px"><i class="t"></i><span>Slot 5</span><i class="k"></i><i class="l"></i></div>
<div class="sl e" style="top:362px"><i class="t"></i><span>Slot 6</span><i class="k"></i><i class="l"></i></div>
<div class="sl e" style="top:421px"><i class="t"></i><span>Slot 7</span><i class="k"></i><i class="l"></i></div>
<div class="sl e" style="top:480px"><i class="t"></i><span>Slot 8</span><i class="k"></i><i class="l"></i></div>
<div class="sl e" style="top:539px"><i class="t"></i><span>Slot 9</span><i class="k"></i><i class="l"></i></div>
<div class="sl a" style="top:598px"><i class="t" style="border-left-color:#9cb8ff"></i><span>Sidechain Comp</span><i class="k" style="border-color:#8eb2ff"></i><i class="l"></i></div>
<div style="position:absolute;left:6px;top:677px;width:290px;height:297px;background:#5e676f;border:1px solid #464d54">
<div style="position:absolute;left:26px;top:0;width:2px;height:100%;background:#555d65"></div>
<div style="position:absolute;left:143px;top:0;width:2px;height:100%;background:#555d65"></div>
<div style="position:absolute;left:236px;top:0;width:2px;height:100%;background:#555d65"></div>
<div style="position:absolute;left:0;top:146px;width:100%;height:4px;background:#d4d8dc"></div></div>
<i class="tk" style="left:320px;top:675px;height:302px"></i><i class="tk" style="left:364px;top:675px;height:302px"></i><i class="tk" style="left:408px;top:675px;height:302px"></i>
<i class="th" style="left:309px;top:812px"></i><i class="th" style="left:353px;top:812px"></i><i class="th" style="left:397px;top:812px"></i>
<div style="position:absolute;left:9px;top:1000px;font-size:21px;font-weight:bold;letter-spacing:2px;color:#2b3036">Equalizer</div>
<div style="position:absolute;left:282px;top:1003px;font-size:12px;color:#2b3036">ш</div>
<div style="position:absolute;left:276px;top:1042px;font-size:18px;color:#2b3036">↔</div>
<i class="sm" style="left:306px;top:1003px;width:36px"></i><i class="sm" style="left:350px;top:1003px;width:36px"></i><i class="sm" style="left:394px;top:1003px;width:36px"></i>
<i class="sm" style="left:310px;top:1043px"></i><i class="sm" style="left:354px;top:1043px"></i><i class="sm" style="left:398px;top:1043px"></i>
<div style="position:absolute;left:0;top:1081px;width:100%;height:2px;background:#4b5259"></div>
<svg style="left:8px;top:1098px" width="36" height="30"><ellipse cx="18" cy="15" rx="16" ry="12" fill="none" stroke="#f4b820" stroke-width="3.5"/><path d="M16 8V16H23" stroke="#f4b820" stroke-width="2.4" fill="none"/></svg>
<div style="position:absolute;left:60px;top:1103px;font-size:17px;letter-spacing:1.5px;color:#e6e8ea">(none)</div>
<div style="position:absolute;left:416px;top:1107px;font-size:12px;color:#868e95">▶</div>
<div style="position:absolute;left:0;top:1143px;width:100%;height:2px;background:#4b5259"></div>
<svg style="left:8px;top:1158px" width="44" height="34"><path d="M20 3A14 14 0 0 0 20 31" fill="none" stroke="#2f353a" stroke-width="4"/><path d="M14 11H26V5L38 17L26 29V23H14Z" fill="#2f353a"/></svg>
<div class="dd" style="left:53px;top:1154px;width:378px;height:42px">(none)<span style="position:absolute;right:12px;top:12px;font-size:12px;color:#8a9096">▶</span></div>
</div>
</body></html>
